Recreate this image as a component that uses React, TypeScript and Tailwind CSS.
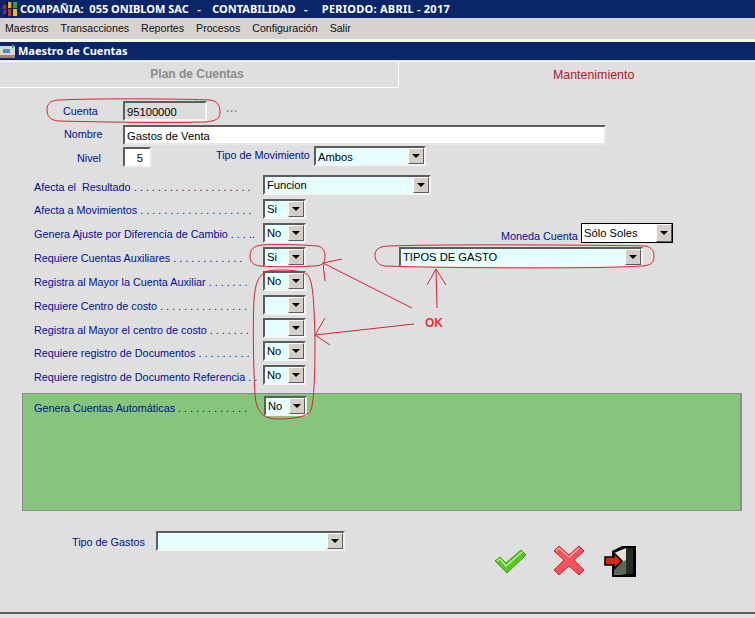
const LABEL = "font-['Liberation_Sans',Arial,sans-serif] text-[10.8px] text-[#000f96] whitespace-pre"
const VALUE = "font-['Liberation_Sans',Arial,sans-serif] text-[11.2px] text-black whitespace-pre"

function Combo({ width, value, className = "", valueClass = "leading-[16px]", black = false }: { width: string; value?: string; className?: string; valueClass?: string; black?: boolean }) {
  return (
    <div
      className={`${width} ${className} h-[20px] shrink-0 flex ${
        black
          ? "border border-black bg-white"
          : "border-2 border-t-[#5c5c5c] border-l-[#5c5c5c] border-r-[#f4f4f4] border-b-[#f4f4f4] bg-[#e6fffe]"
      }`}
    >
      <div className={`${VALUE} ${valueClass} flex-1 pl-[2px]`}>{value}</div>
      <div className="w-[16px] h-full flex items-center justify-center bg-[#d4d0c8] border border-t-white border-l-white border-r-[#5c5c5c] border-b-[#5c5c5c]">
        <svg width="8" height="4" viewBox="0 0 8 4">
          <path d="M0 0h8L4 4z" fill="#000" />
        </svg>
      </div>
    </div>
  )
}

function Row({ label, value, mt = "mt-[4px]", pt = "pt-[4px]" }: { label: string; value?: string; mt?: string; pt?: string }) {
  return (
    <div className={`flex ${mt}`}>
      <div className={`${LABEL} ${pt} w-[229px] leading-[14px]`}>{label}</div>
      <Combo width="w-[43px]" value={value} />
    </div>
  )
}

function Annotations() {
  return (
    <svg className="absolute left-0 top-0 pointer-events-none" width="755" height="618" fill="none" stroke="#d8232f" strokeWidth="1">
      {/* ovals */}
      <path d="M60 100 C100 98 190 99 210 100 C218 101 220 106 220 112 C220 119 216 121 205 122 C160 123 100 122 58 121 C50 120 47 116 47 110 C47 103 51 100 60 100Z" />
      <path d="M262 245 C280 244 305 245 318 246 C324 248 325 252 325 256 C325 263 322 266 314 266 C295 267 275 267 260 266 C253 265 250 262 250 256 C250 249 254 246 262 245Z" />
      <path d="M390 246 C440 244 600 245 645 246 C652 247 654 251 654 256 C654 262 652 266 640 266 C600 269 440 268 385 266 C378 265 375 261 375 255 C375 249 380 246 390 246Z" />
      <path d="M268 271 C280 269 300 270 307 274 C313 280 314 300 315 340 C315 375 314 400 311 410 C307 418 290 419 275 419 C262 418 256 410 255 395 C253 360 253 320 254 300 C255 285 258 274 268 271Z" />
      {/* arrows */}
      <path d="M412 308 L323 263 M323 263 L342 259 M323 263 L325 281" />
      <path d="M414 324 L315 335 M315 335 L325 318 M315 335 L330 345" />
      <path d="M437 308 L436 269 M436 269 L427 285 M436 269 L446 285" />
    </svg>
  )
}

export default function App() {
  return (
    <div className="relative w-[755px] h-[618px] overflow-hidden bg-[#dfdfdf]">
      {/* title bar */}
      <div className="h-[18px] bg-[#0a2568] flex items-center">
        <svg className="ml-[3px] mr-[2px]" width="15" height="16" viewBox="0 0 15 16">
          <rect x="0" y="4" width="4" height="4" fill="#c01c50" />
          <rect x="0" y="9" width="4" height="4" fill="#4b3fa0" />
          <rect x="5" y="1" width="4" height="6" fill="#d8b020" />
          <rect x="5" y="8" width="4" height="7" fill="#c03030" />
          <rect x="10" y="1" width="4" height="6" fill="#30a050" />
          <rect x="10" y="8" width="4" height="7" fill="#e0c020" />
          <path d="M4 0v16M9 0v16" stroke="#000" strokeWidth="1" />
        </svg>
        <span className="font-['Noto_Sans',Tahoma,sans-serif] font-bold text-[11px] text-white whitespace-pre">
          COMPAÑIA:  055 ONIBLOM SAC   -    CONTABILIDAD   -     <span className="tracking-[0.25px]">PERIODO: ABRIL - 2017</span>
        </span>
      </div>

      {/* menu */}
      <div className="h-[21px] bg-[#d6d3ce] flex items-center gap-[12px] pl-[5px] font-['Liberation_Sans',Arial,sans-serif] text-[10.6px] text-[#111]">
        <span>Maestros</span>
        <span>Transacciones</span>
        <span>Reportes</span>
        <span>Procesos</span>
        <span>Configuración</span>
        <span>Salir</span>
      </div>
      <div className="h-[3px] bg-[#f4f4f4]" />

      {/* window title */}
      <div className="h-[18px] bg-[#0a2568] flex items-center">
        <svg className="mr-[1px]" width="17" height="17" viewBox="0 0 17 17">
          <rect x="0" y="3" width="15" height="12" fill="#d8d8d0" />
          <rect x="3" y="6" width="7" height="4" fill="#4a90c8" />
          <rect x="0" y="12" width="15" height="3" fill="#a08868" />
          <path d="M12 1l3 2-3 3z" fill="#3aa84a" />
        </svg>
        <span className="font-['Noto_Sans',Tahoma,sans-serif] font-bold text-[11px] text-white">Maestro de Cuentas</span>
      </div>

      {/* tabs */}
      <div className="flex mt-[1px] h-[27px]">
        <div className="w-[399px] border-t border-r border-b border-white flex items-center justify-center font-['Liberation_Sans',Arial,sans-serif] font-bold text-[12px] text-[#8c8c8c] pb-[2px] pr-[4px]">
          Plan de Cuentas
        </div>
        <div className="flex-1 border-t border-white pt-[4px] pl-[154px] font-['Liberation_Sans',Arial,sans-serif] text-[12.4px] text-[#b01c24]">
          Mantenimiento
        </div>
      </div>

      {/* header fields */}
      <div className="mt-[13px] flex">
        <div className={`${LABEL} w-[123px] pl-[63px] pt-[3px] leading-[14px]`}>Cuenta</div>
        <div className={`${VALUE} w-[84px] h-[20px] border-2 border-t-[#5c5c5c] border-l-[#5c5c5c] border-r-[#f4f4f4] border-b-[#f4f4f4] pl-[2px] leading-[18px] bg-[#dcdcdc]`}>95100000</div>
        <span className="ml-[19px] text-[11px] font-bold tracking-[1px] text-[#8c8c8c] font-['Liberation_Sans',Arial,sans-serif] leading-[14px]">...</span>
      </div>
      <div className="mt-[4px] flex">
        <div className={`${LABEL} w-[123px] pl-[64px] pt-[2px] leading-[14px]`}>Nombre</div>
        <div className={`${VALUE} w-[483px] h-[20px] border-2 border-t-[#5c5c5c] border-l-[#5c5c5c] border-r-[#e8e8e8] border-b-[#e8e8e8] bg-white pl-[2px] leading-[18px]`}>Gastos de Venta</div>
      </div>
      <div className="mt-[2px] flex">
        <div className={`${LABEL} w-[123px] pl-[77px] pt-[4px] leading-[14px]`}>Nivel</div>
        <div className={`${VALUE} w-[28px] h-[20px] border-2 border-t-[#5c5c5c] border-l-[#5c5c5c] border-r-[#f4f4f4] border-b-[#f4f4f4] bg-white text-right pr-[6px] leading-[18px]`}>5</div>
        <div className={`${LABEL} ml-[65px] w-[98px] pt-[1px] leading-[14px]`}>Tipo de Movimiento</div>
        <Combo width="w-[112px]" value="Ambos" className="-mt-[1px]" valueClass="leading-[19px]" />
      </div>

      {/* questions */}
      <div className="pl-[34px]">
        <div className="flex mt-[8px]">
          <div className={`${LABEL} w-[229px] pt-[5px] leading-[14px]`}>Afecta el  Resultado . . . . . . . . . . . . . . . . . . . .</div>
          <Combo width="w-[168px]" value="Funcion" />
        </div>
        <Row label="Afecta a Movimientos . . . . . . . . . . . . . . . . . . ." value="Si" />
        <div className="flex mt-[4px]">
          <div className={`${LABEL} w-[229px] pt-[4px] leading-[14px]`}>Genera Ajuste por Diferencia de Cambio . . . ..</div>
          <Combo width="w-[43px]" value="No" />
          <div className={`${LABEL} ml-[195px] w-[80px] pt-[6px] leading-[14px]`}>Moneda Cuenta</div>
          <Combo width="w-[92px]" value="Sólo Soles" black valueClass="leading-[19px]" />
        </div>
        <div className="flex mt-[4px]">
          <div className={`${LABEL} w-[229px] pt-[4px] leading-[14px]`}>Requiere Cuentas Auxiliares . . . . . . . . . . . .</div>
          <Combo width="w-[43px]" value="Si" />
          <Combo width="w-[244px]" value="TIPOS DE GASTO" className="ml-[93px]" />
        </div>
        <Row label="Registra al Mayor la Cuenta Auxiliar . . . . . . ." value="No" />
        <Row label="Requiere Centro de costo . . . . . . . . . . . . . . ." />
        <Row label="Registra al Mayor el centro de costo . . . . . . ." mt="mt-[3px]" pt="pt-[5px]" />
        <Row label="Requiere registro de Documentos . . . . . . . . ." value="No" mt="mt-[3px]" pt="pt-[5px]" />
        <Row label="Requiere registro de Documento Referencia . ." value="No" pt="pt-[5px]" />
      </div>

      {/* green panel */}
      <div className="ml-[22px] mt-[8px] w-[720px] h-[118px] bg-[#86c67c] border-t border-l border-r-2 border-b border-[#8a8a8a] pl-[11px] pt-[2px]">
        <div className="flex">
          <div className={`${LABEL} w-[230px] pt-[5px] leading-[14px]`}>Genera Cuentas Automáticas . . . . . . . . . . . .</div>
          <Combo width="w-[43px]" value="No" />
        </div>
      </div>

      {/* bottom */}
      <div className="flex items-start mt-[20px]">
        <div className={`${LABEL} w-[156px] pl-[72px] pt-[4px] leading-[14px]`}>Tipo de Gastos</div>
        <Combo width="w-[189px]" />
        <div className="flex items-start ml-[149px] mt-[14px]">
          <svg className="mt-[4px]" width="32" height="25" viewBox="0 0 32 25">
            <path d="M1 12 L6 8 L12 14 L27 1 L32 6 L13 24 Z" fill="#5fc32c" stroke="#3d9a1c" strokeWidth="1" strokeLinejoin="round" />
            <path d="M3 12 L6 10 L12 17 L28 3" fill="none" stroke="#b8ee8c" strokeWidth="1.5" />
          </svg>
          <svg className="ml-[27px]" width="32" height="31" viewBox="0 0 32 31">
            <path d="M1 6 L6 1 L16 10 L26 1 L31 6 L21 15 L31 25 L26 30 L16 21 L6 30 L1 25 L11 15 Z" fill="#f2535f" stroke="#c8202c" strokeWidth="1" strokeLinejoin="round" />
            <path d="M3 6 L6 3 L16 12 L26 3" fill="none" stroke="#ffb0b4" strokeWidth="1.2" />
          </svg>
          <svg className="ml-[19px] mt-[1px]" width="32" height="31" viewBox="0 0 32 31">
            <path d="M8 5 L18 0 L32 0 L32 31 L8 31Z" fill="#000" />
            <path d="M10 7 L22 2 L22 28 L10 29Z" fill="#e2e2da" />
            <path d="M22 2 L29 2 L29 28 L22 28Z" fill="#24301f" />
            <path d="M10 20 L22 14 L22 28 L10 29Z" fill="#5a6a58" />
            <path d="M1 11 L10 11 L10 7 L18 15 L10 23 L10 19 L1 19Z" fill="#d8261c" stroke="#000" strokeWidth="1.5" />
          </svg>
        </div>
      </div>

      {/* status line */}
      <div className="absolute left-0 bottom-0 w-full h-[6px] border-t-2 border-[#5e5e5e] bg-[#e4e4e4]" />

      <Annotations />
      <span className="absolute left-[425px] top-[314px] font-['Liberation_Sans',Arial,sans-serif] font-bold text-[12px] text-[#e8303c]">OK</span>
    </div>
  )
}
